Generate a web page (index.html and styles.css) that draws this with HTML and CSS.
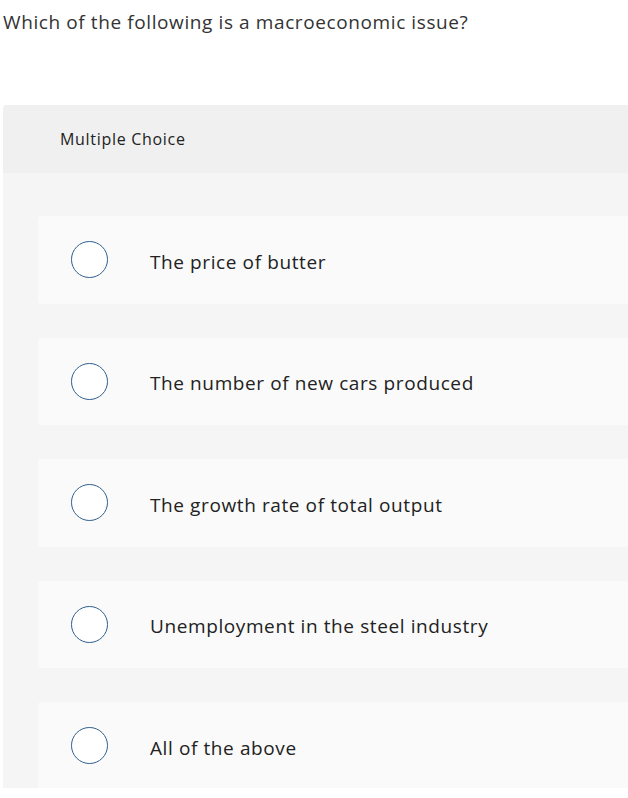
FILE: index.html
```html
<!DOCTYPE html>
<html>
<head>
<meta charset="utf-8">
<link rel="stylesheet" href="styles.css">
</head>
<body>
<div class="question">Which of the following is a macroeconomic issue?</div>
<div class="panel">
  <div class="panel-head">Multiple Choice</div>
  <div class="panel-body">
    <div class="option"><span class="radio"></span><span class="label">The price of butter</span></div>
    <div class="option"><span class="radio"></span><span class="label">The number of new cars produced</span></div>
    <div class="option"><span class="radio"></span><span class="label">The growth rate of total output</span></div>
    <div class="option"><span class="radio"></span><span class="label">Unemployment in the steel industry</span></div>
    <div class="option"><span class="radio"></span><span class="label">All of the above</span></div>
  </div>
</div>
</body>
</html>
```
FILE: styles.css
```css
html, body {
  margin: 0;
  padding: 0;
  background: #ffffff;
  overflow: hidden;
}
body {
  font-family: "Open Sans", "Liberation Sans", sans-serif;
  color: #222222;
  width: 628px;
  height: 798px;
}
.question {
  font-size: 19px;
  line-height: 24px;
  letter-spacing: 0.6px;
  padding: 10px 0 0 3px;
  height: 95px;
  box-sizing: border-box;
  color: #333333;
}
.panel {
  margin: 10px 0 0 3px;
  border-top-left-radius: 3px;
  overflow: hidden;
}
.panel-head {
  background: #f0f0f0;
  height: 68px;
  box-sizing: border-box;
  padding-left: 57px;
  display: flex;
  align-items: center;
  font-size: 16px;
  letter-spacing: 0.7px;
  color: #222222;
}
.panel-body {
  background: #f5f5f5;
  padding: 43px 0 0 35px;
  height: 615px;
  box-sizing: border-box;
  display: flex;
  flex-direction: column;
  gap: 34px;
}
.option {
  background: #fafafa;
  height: 87.5px;
  flex: none;
  border-top-left-radius: 4px;
  border-bottom-left-radius: 4px;
  display: flex;
  align-items: center;
  padding-left: 33px;
}
.radio {
  width: 35px;
  height: 35px;
  border: 1.5px solid #2f5f8f;
  border-radius: 50%;
  background: #ffffff;
  flex: none;
}
.label {
  margin-left: 42px;
  padding-top: 4px;
  font-size: 19px;
  letter-spacing: 0.6px;
  color: #222222;
}
```
